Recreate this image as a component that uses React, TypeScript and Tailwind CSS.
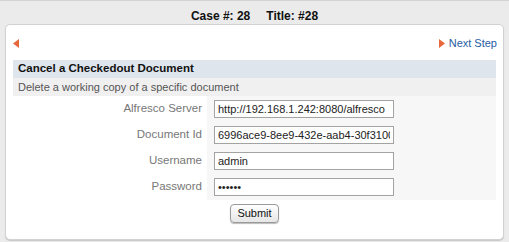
const fields = [
  { label: "Alfresco Server", value: "http://192.168.1.242:8080/alfresco", type: "text" },
  { label: "Document Id", value: "6996ace9-8ee9-432e-aab4-30f310000000", type: "text" },
  { label: "Username", value: "admin", type: "text" },
  { label: "Password", value: "secret", type: "password" },
];

const Arrow = ({ dir }: { dir: "left" | "right" }) => (
  <svg width="6" height="9" viewBox="0 0 6 9" className="block">
    {dir === "left" ? (
      <path d="M6 0 L0 4.5 L6 9 Z" fill="#e8683e" />
    ) : (
      <path d="M0 0 L6 4.5 L0 9 Z" fill="#e8683e" />
    )}
  </svg>
);

const App = () => {
  return (
    <div
      className="w-[509px] h-[242px] bg-[#ebebeb] border-t border-[#d3d3d3] flex flex-col overflow-hidden"
      style={{ fontFamily: '"Liberation Sans", Arial, sans-serif' }}
    >
      <div className="h-[23px] flex items-center justify-center gap-[16px] text-[12px] font-bold text-[#111] pt-[6px]">
        <span>Case #: 28</span>
        <span>Title: #28</span>
      </div>

      <div className="mx-[5px] h-[216px] bg-white border border-[#d2d2d2] rounded-[5px] shadow-[0_1px_1px_#c8c8c8] flex flex-col">
        {/* nav */}
        <div className="h-[35px] flex items-center justify-between pl-[7px] pr-[6px] pt-[2px]">
          <Arrow dir="left" />
          <a className="flex items-center gap-[4px] text-[11px] text-[#1f5ca3] cursor-pointer">
            <Arrow dir="right" />
            <span>Next Step</span>
          </a>
        </div>

        <div className="mx-[7px] flex flex-col">
          <div className="h-[18px] bg-[#dfe5ec] flex items-center pl-[5px] text-[11.5px] font-bold text-[#111]">
            Cancel a Checkedout Document
          </div>
          <div className="h-[18px] bg-[#f0f0f0] flex items-center pl-[5px] text-[11px] text-[#555]">
            Delete a working copy of a specific document
          </div>
          <div className="flex flex-col">
            {fields.map((f) => (
              <div key={f.label} className="flex h-[26px]">
                <div className="w-[194px] flex items-center justify-end pr-[5px] text-[11.5px] text-[#777]">
                  {f.label}
                </div>
                <div className="flex-1 bg-[#f7f7f7] flex items-center pl-[7px]">
                  <input
                    type={f.type}
                    defaultValue={f.value}
                    readOnly
                    className="w-[180px] h-[18px] border border-[#a3a3a3] bg-white px-[3px] text-[11px] text-[#222] outline-none"
                  />
                </div>
              </div>
            ))}
          </div>
        </div>

        <div className="flex justify-center pt-[4px]">
          <button className="w-[49px] h-[19px] rounded-[4px] border border-[#9a9a9a] bg-gradient-to-b from-white to-[#e6e6e6] text-[11px] text-[#111] shadow-[0_1px_1px_#bbb]">
            Submit
          </button>
        </div>
      </div>
    </div>
  );
};

export default App;
